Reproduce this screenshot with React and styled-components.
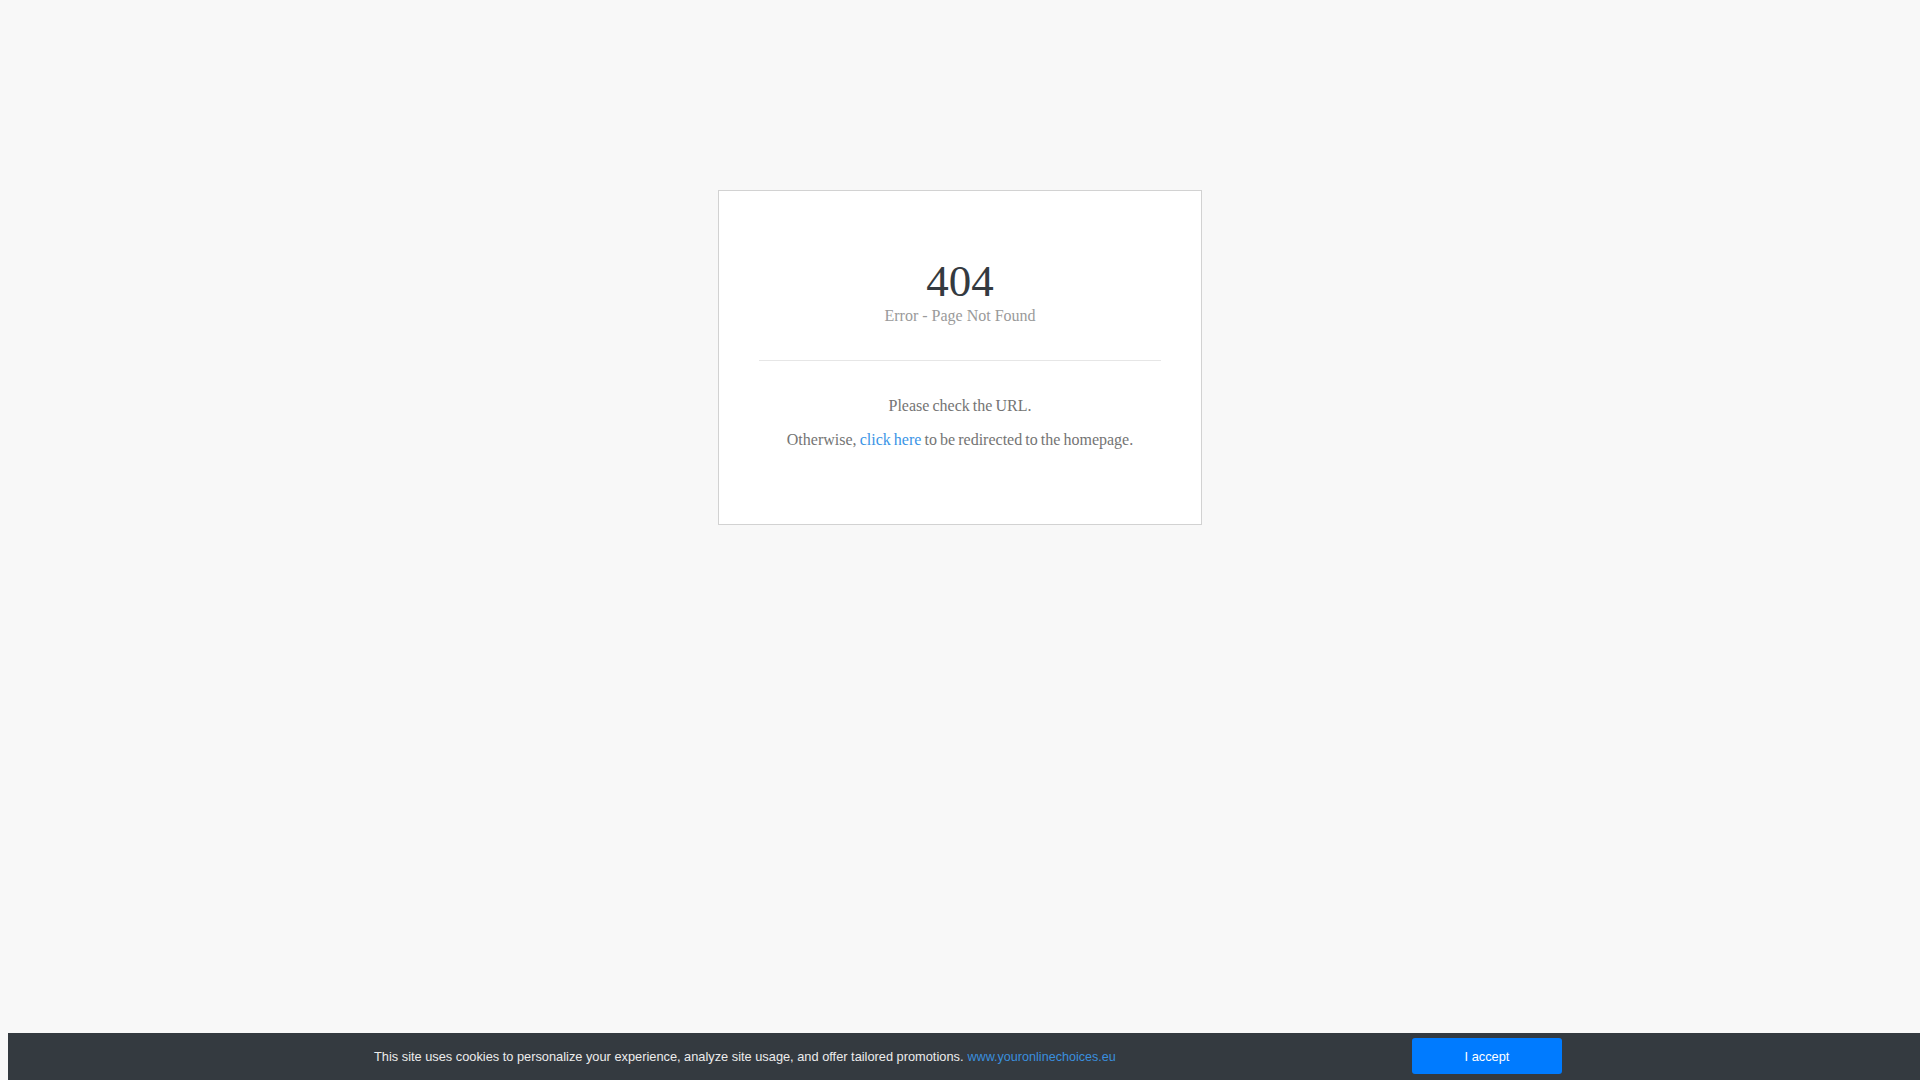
import React from "react";
import styled, { createGlobalStyle } from "styled-components";

const Global = createGlobalStyle`
  html, body { background: #f8f8f8; }
  body {
    margin: 8px;
    font-family: "Liberation Serif", "Times New Roman", serif;
    min-height: 1064px;
  }
`;

const Card = styled.main`
  box-sizing: border-box;
  width: 484px;
  height: 335px;
  margin: 182px auto 0;
  padding: 68px 40px 0;
  background: #ffffff;
  border: 1px solid #d2d2d2;
  text-align: center;
`;

const Code = styled.h1`
  margin: 0;
  font-size: 45px;
  line-height: 1;
  font-weight: 400;
  color: #343a40;
`;

const Subtitle = styled.div`
  margin-top: 2px;
  font-size: 16px;
  line-height: 1.2;
  color: #9a9a9a;
`;

const Rule = styled.hr`
  margin: 35px 0 0;
  border: 0;
  border-top: 1px solid #e6e6e6;
  height: 0;
`;

const Text = styled.p`
  margin: ${(p) => (p.$first ? "33px" : "9.5px")} 0 0;
  font-size: 16px;
  line-height: 1.5;
  word-spacing: -0.9px;
  color: #747474;
`;

const Link = styled.a`
  color: #3a94e6;
  text-decoration: none;
`;

const CookieBar = styled.div`
  position: fixed;
  left: 8px;
  bottom: 0;
  width: 1920px;
  box-sizing: border-box;
  padding: 5px 0 6px;
  background: #343a40;
  font-family: "Liberation Sans", Arial, sans-serif;
  font-size: 12.8px;
`;

const CookieInner = styled.div`
  width: 1188px;
  margin: 0 auto;
  display: flex;
  align-items: center;
  justify-content: space-between;
`;

const CookieText = styled.span`
  color: #ececec;
`;

const CookieLink = styled.a`
  color: #3a8fde;
  text-decoration: none;
  margin-left: 4px;
  font-size: 12.6px;
`;

const AcceptButton = styled.button`
  width: 150px;
  height: 36px;
  border: 0;
  border-radius: 3px;
  background: #007bff;
  color: #ffffff;
  font-family: "Liberation Sans", Arial, sans-serif;
  font-size: 12.8px;
  cursor: pointer;
`;

export default function App() {
  return (
    <>
      <Global />
      <Card>
        <Code>404</Code>
        <Subtitle>Error - Page Not Found</Subtitle>
        <Rule />
        <Text $first>Please check the URL.</Text>
        <Text>
          Otherwise, <Link href="#">click here</Link> to be redirected to the
          homepage.
        </Text>
      </Card>
      <CookieBar>
        <CookieInner>
          <CookieText>
            This site uses cookies to personalize your experience, analyze site
            usage, and offer tailored promotions.
            <CookieLink href="#">www.youronlinechoices.eu</CookieLink>
          </CookieText>
          <AcceptButton>I accept</AcceptButton>
        </CookieInner>
      </CookieBar>
    </>
  );
}
